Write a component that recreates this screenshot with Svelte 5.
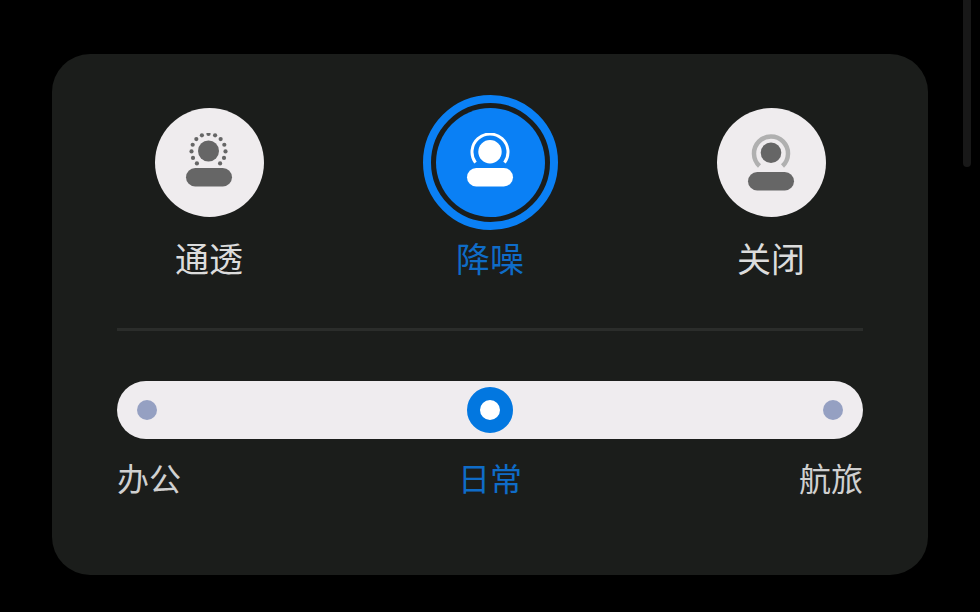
<script lang="ts">
	const modes = [
		{ key: 'transparent', label: '通透' },
		{ key: 'noise', label: '降噪', active: true },
		{ key: 'off', label: '关闭' }
	];
	const scenes = [
		{ label: '办公' },
		{ label: '日常', active: true },
		{ label: '航旅' }
	];
	// dotted halo round the head of the first icon
	const dots = Array.from({ length: 13 }, (_, i) => {
		const a = ((133 + (i * 274) / 12) * Math.PI) / 180;
		return { x: 29.5 + 17 * Math.cos(a), y: 18 + 17 * Math.sin(a) };
	});
</script>

<div class="screen">
	<div class="scrollbar"></div>
	<div class="card">
		<div class="modes">
			{#each modes as mode}
				<div class="mode" class:active={mode.active}>
					<div class="ring">
						<div class="circle">
							<svg width="60" height="60" viewBox="0 0 60 60">
								{#if mode.key === 'transparent'}
									{#each dots as d}
										<circle cx={d.x} cy={d.y} r="2.1" />
									{/each}
									<circle cx="29.5" cy="18" r="10.5" />
									<rect x="7" y="35" width="46" height="18.5" rx="9.25" />
								{:else if mode.key === 'noise'}
									<path class="arc" d="M15.5 29.7A18 18 0 1 1 44.5 29.7" />
									<circle cx="30" cy="18.7" r="11.7" />
									<rect x="7" y="35" width="46" height="18.5" rx="9.25" />
								{:else}
									<path class="arc dim" d="M18.5 33A17 17 0 1 1 41.5 33" />
									<circle cx="30" cy="19.7" r="10.3" />
									<rect x="7" y="39" width="46" height="18.5" rx="9.25" />
								{/if}
							</svg>
						</div>
					</div>
					<span class="label">{mode.label}</span>
				</div>
			{/each}
		</div>
		<div class="divider"></div>
		<div class="slider">
			<span class="dot"></span>
			<span class="thumb"></span>
			<span class="dot"></span>
		</div>
		<div class="scenes">
			{#each scenes as scene}
				<span class="scene" class:active={scene.active}>{scene.label}</span>
			{/each}
		</div>
	</div>
</div>

<style>
	:global(body) {
		margin: 0;
		background: #000;
	}

	.screen {
		position: relative;
		box-sizing: border-box;
		width: 980px;
		height: 612px;
		padding: 54px 52px 37px;
		background: #000;
		font-family: 'Noto Sans CJK SC', 'Noto Sans', sans-serif;
		overflow: hidden;
	}

	.scrollbar {
		position: absolute;
		left: 963px;
		top: -10px;
		width: 8px;
		height: 177px;
		border-radius: 4px;
		background: #181818;
	}

	.card {
		box-sizing: border-box;
		width: 876px;
		height: 521px;
		padding: 41px 65px 0;
		border-radius: 38px;
		background: #1b1d1b;
	}

	.modes {
		display: flex;
		justify-content: space-between;
		height: 233px;
	}

	.mode {
		display: flex;
		flex-direction: column;
		align-items: center;
		width: 184px;
		color: #dcdcdc;
	}

	.ring {
		box-sizing: border-box;
		display: flex;
		align-items: center;
		justify-content: center;
		width: 135px;
		height: 135px;
		border-radius: 50%;
		border: 8px solid transparent;
	}

	.circle {
		display: flex;
		flex-shrink: 0;
		align-items: center;
		justify-content: center;
		width: 109px;
		height: 109px;
		border-radius: 50%;
		background: #efecee;
	}

	.circle svg {
		fill: #666666;
	}

	.arc {
		fill: none;
		stroke: #666666;
		stroke-width: 3;
	}

	.arc.dim {
		stroke: #b0b0b0;
		stroke-width: 4.5;
	}

	.label {
		margin-top: 3px;
		font-size: 34px;
		line-height: 50px;
	}

	.mode.active {
		color: #0f6cc8;
	}

	.mode.active .ring {
		border-color: #0a80f5;
	}

	.mode.active .circle {
		background: #0a80f5;
	}

	.mode.active svg {
		fill: #fff;
	}

	.mode.active .arc {
		stroke: #fff;
	}

	.divider {
		height: 3px;
		background: #2b2d2b;
	}

	.slider {
		display: flex;
		align-items: center;
		justify-content: space-between;
		height: 58px;
		margin-top: 50px;
		padding: 0 20px;
		border-radius: 29px;
		background: #efecef;
	}

	.dot {
		width: 20px;
		height: 20px;
		border-radius: 50%;
		background: #95a0c2;
	}

	.thumb {
		box-sizing: border-box;
		width: 46px;
		height: 46px;
		border-radius: 50%;
		border: 13px solid #0277e0;
		background: #fff;
	}

	.scenes {
		display: flex;
		justify-content: space-between;
		margin-top: 15px;
		font-size: 32px;
		line-height: 47px;
		color: #d0d0d0;
	}

	.scene.active {
		color: #0f6cc8;
	}
</style>
